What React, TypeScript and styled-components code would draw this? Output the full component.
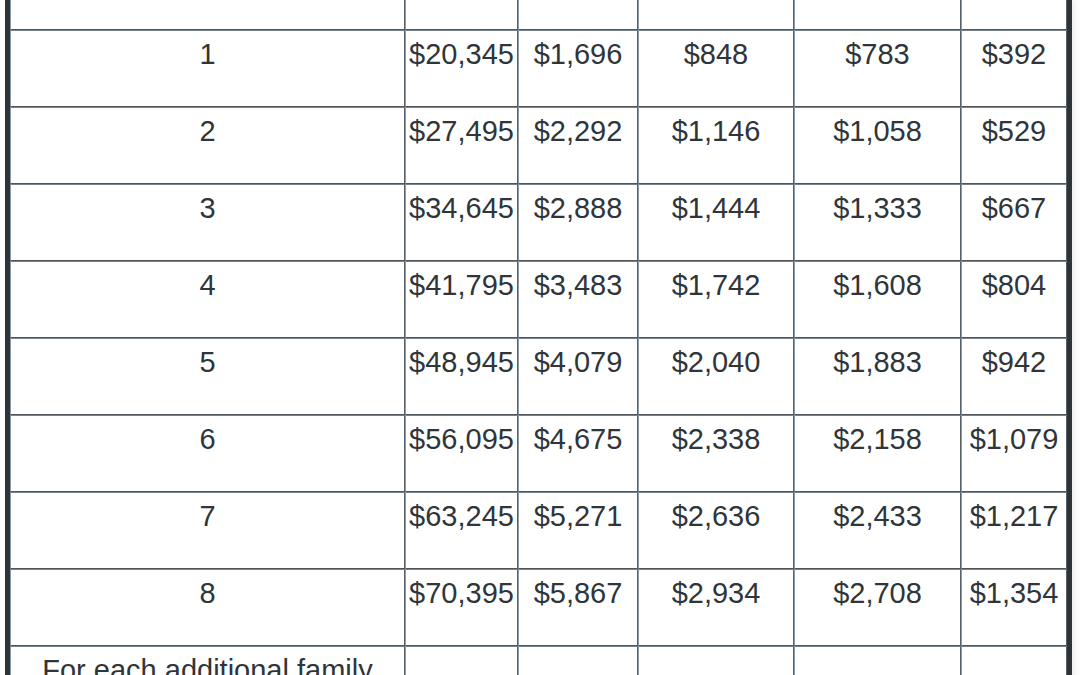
import React from "react";
import styled, { createGlobalStyle } from "styled-components";

const Global = createGlobalStyle`
  html, body {
    margin: 0;
    padding: 0;
    background: #ffffff;
    overflow: hidden;
  }
  body {
    font-family: "Liberation Sans", Arial, Helvetica, sans-serif;
    color: #2f3539;
  }
`;

const Viewport = styled.div`
  height: 675px;
  overflow: hidden;
  padding-left: 5px;
  background: #ffffff;
`;

const Table = styled.table`
  table-layout: fixed;
  border-collapse: separate;
  border-spacing: 0;
  width: 1067px;
  border-left: 5px solid #2e3437;
  border-right: 5px solid #2e3437;
  box-shadow: 3px 0 6px rgba(0, 0, 0, 0.07);
  font-size: 29px;
  line-height: normal;
`;

const Col = styled.col<{ $w: number }>`
  width: ${(p) => p.$w}px;
`;

const Row = styled.tr<{ $head?: boolean }>`
  height: ${(p) => (p.$head ? 30 : 77)}px;
`;

const Cell = styled.td<{ $head?: boolean }>`
  box-sizing: border-box;
  height: ${(p) => (p.$head ? 30 : 77)}px;
  padding: ${(p) => (p.$head ? "0" : "7px 1px 35px")};
  text-align: center;
  vertical-align: middle;
  white-space: nowrap;
  border-style: solid;
  border-width: ${(p) => (p.$head ? "0 1px 1px 1px" : "1px")};
  border-top-color: #77838b;
  border-left-color: #8b9ca8;
  border-right-color: #56616a;
  border-bottom-color: #4e565c;
`;

const LabelCell = styled(Cell)`
  white-space: normal;
  padding-left: 30px;
  padding-right: 30px;
`;

const widths = [395, 113, 120, 156, 167, 106];

const rows: string[][] = [
  ["1", "$20,345", "$1,696", "$848", "$783", "$392"],
  ["2", "$27,495", "$2,292", "$1,146", "$1,058", "$529"],
  ["3", "$34,645", "$2,888", "$1,444", "$1,333", "$667"],
  ["4", "$41,795", "$3,483", "$1,742", "$1,608", "$804"],
  ["5", "$48,945", "$4,079", "$2,040", "$1,883", "$942"],
  ["6", "$56,095", "$4,675", "$2,338", "$2,158", "$1,079"],
  ["7", "$63,245", "$5,271", "$2,636", "$2,433", "$1,217"],
  ["8", "$70,395", "$5,867", "$2,934", "$2,708", "$1,354"],
];

export default function App() {
  return (
    <>
      <Global />
      <Viewport>
        <Table>
          <colgroup>
            {widths.map((w, i) => (
              <Col key={i} $w={w} />
            ))}
          </colgroup>
          <tbody>
            <Row $head>
              {widths.map((_, i) => (
                <Cell key={i} $head />
              ))}
            </Row>
            {rows.map((r) => (
              <Row key={r[0]}>
                {r.map((v, i) => (
                  <Cell key={i}>{v}</Cell>
                ))}
              </Row>
            ))}
            <Row>
              <LabelCell>For each additional family member, add</LabelCell>
              {widths.slice(1).map((_, i) => (
                <Cell key={i} />
              ))}
            </Row>
          </tbody>
        </Table>
      </Viewport>
    </>
  );
}
